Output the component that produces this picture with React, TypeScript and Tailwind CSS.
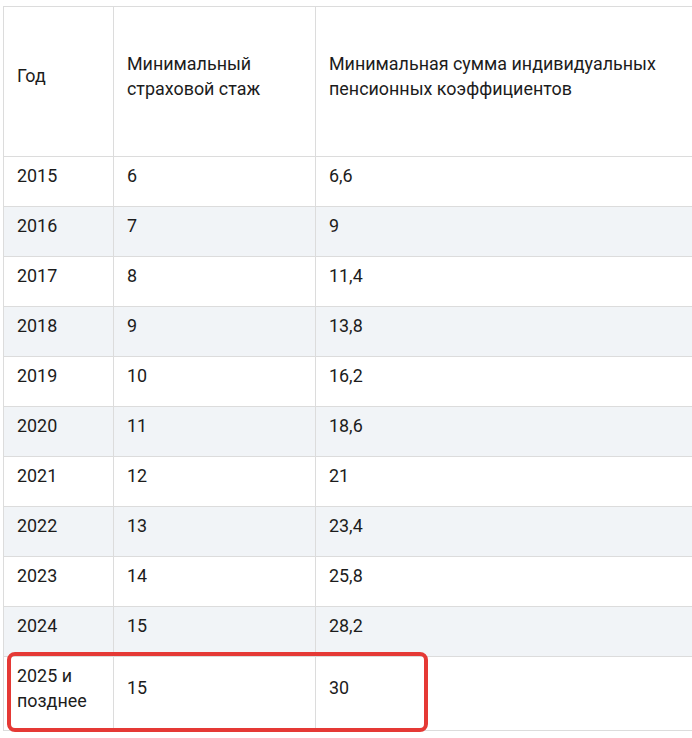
import React from "react";

const rows: [string, string, string][] = [
  ["2015", "6", "6,6"],
  ["2016", "7", "9"],
  ["2017", "8", "11,4"],
  ["2018", "9", "13,8"],
  ["2019", "10", "16,2"],
  ["2020", "11", "18,6"],
  ["2021", "12", "21"],
  ["2022", "13", "23,4"],
  ["2023", "14", "25,8"],
  ["2024", "15", "28,2"],
];

const cell =
  "border border-[#dcdcdc] pl-[13px] pr-[14px] pt-[4px] pb-[16px] align-middle text-left font-normal";

export default function App() {
  return (
    <div
      className="relative w-[692px] h-[738px] overflow-hidden bg-white text-[#1c1c1c] text-[17.9px] leading-[25px]"
      style={{ fontFamily: "Roboto, 'Liberation Sans', sans-serif" }}
    >
      <div className="pl-[3px] pt-[6px]">
        <table className="table-fixed border-collapse w-[720px]">
          <colgroup>
            <col className="w-[110px]" />
            <col className="w-[202px]" />
            <col />
          </colgroup>
          <thead>
            <tr className="h-[150px]">
              <th className={cell}>Год</th>
              <th className={cell}>
                Минимальный
                <br />
                страховой стаж
              </th>
              <th className={cell}>
                Минимальная сумма индивидуальных
                <br />
                пенсионных коэффициентов
              </th>
            </tr>
          </thead>
          <tbody>
            {rows.map((r, i) => (
              <tr
                key={r[0]}
                className={i % 2 === 1 ? "h-[50px] bg-[#f1f4f7]" : "h-[50px] bg-white"}
              >
                <td className={cell}>{r[0]}</td>
                <td className={cell}>{r[1]}</td>
                <td className={cell}>{r[2]}</td>
              </tr>
            ))}
            <tr className="h-[74px] bg-white">
              <td className={cell}>
                2025 и
                <br />
                позднее
              </td>
              <td className={cell}>15</td>
              <td className={cell}>30</td>
            </tr>
          </tbody>
        </table>
        <p className="mt-[5px] pl-[2px] text-[#333333] whitespace-nowrap">
          С 2015 по 2023 год требования ежегодно повышались, а в 2025 году достигли максимума.
        </p>
      </div>
      <div className="absolute left-[7px] top-[652px] w-[421px] h-[80px] border-[4px] border-[#e53935] rounded-[8px]" />
    </div>
  );
}
